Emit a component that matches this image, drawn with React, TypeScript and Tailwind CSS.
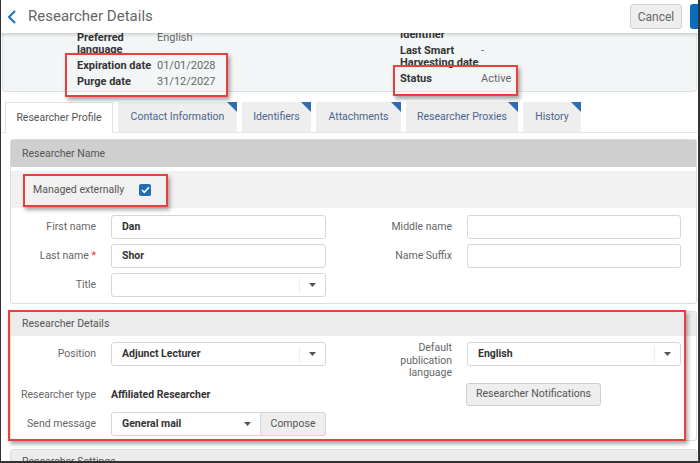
import React from 'react';

const tabs = [
  { label: 'Researcher Profile', w: 'w-[108px]', active: true },
  { label: 'Contact Information', w: 'w-[119px]' },
  { label: 'Identifiers', w: 'w-[69px]' },
  { label: 'Attachments', w: 'w-[85px]' },
  { label: 'Researcher Proxies', w: 'w-[112px]' },
  { label: 'History', w: 'w-[58px]' },
];

function Caret() {
  return (
    <svg width="7" height="4" viewBox="0 0 7 4">
      <path d="M0 0h7L3.5 4z" fill="#555" />
    </svg>
  );
}

function Label({ children }: { children: React.ReactNode }) {
  return <div className="text-right text-[#666] leading-[24px]">{children}</div>;
}

function TextInput({ value }: { value?: string }) {
  return (
    <div className="h-[24px] border border-[#d6d6d6] rounded-[3px] bg-white pl-[10px] flex items-center font-bold text-[#333]">
      {value}
    </div>
  );
}

function Select({ value }: { value?: string }) {
  return (
    <div className="h-[24px] border border-[#d6d6d6] rounded-[3px] bg-white flex items-center">
      <span className="flex-1 pl-[10px] font-bold text-[#333]">{value}</span>
      <div className="w-[26px] h-[16px] border-l border-[#eee] flex items-center justify-center">
        <Caret />
      </div>
    </div>
  );
}

function RedBox({ className }: { className: string }) {
  return (
    <div
      className={`absolute border-2 border-[#e8413c] shadow-[2px_3px_4px_rgba(0,0,0,0.35)] pointer-events-none ${className}`}
    />
  );
}

export default function App() {
  return (
    <div className="relative w-[700px] h-[463px] overflow-hidden bg-white border-l border-r-2 border-b-2 border-[#333] font-[Roboto,sans-serif] text-[10.5px] text-[#666]">
      {/* Top bar */}
      <header className="relative z-10 h-[33px] flex items-center bg-white shadow-[0_2px_3px_rgba(0,0,0,0.15)]">
        <svg className="ml-[6px]" width="10" height="16" viewBox="0 0 10 16">
          <path d="M8 2L2 8l6 6" fill="none" stroke="#1b6ec2" strokeWidth="2" />
        </svg>
        <h1 className="ml-[11px] text-[15px] text-[#666]">Researcher Details</h1>
        <div className="flex-1" />
        <button className="h-[25px] w-[52px] bg-[#eeeeee] border border-[#cfcfcf] rounded-[3px] text-[12px] text-[#666]">
          Cancel
        </button>
        <div className="ml-[8px] w-[8px] h-[25px] bg-[#0b6cb9] rounded-l-[3px]" />
      </header>

      {/* Summary panel (scrolled) */}
      <section className="ml-[1px] mr-[1px] h-[59px] overflow-hidden bg-[#f3f6f7] border-x border-b border-[#dde2e4] rounded-b-[4px] flex items-start pl-[74px] text-[11px]">
        <div className="w-[323px] -mt-[1px] flex flex-col gap-[4px] leading-[12px]">
          <div className="flex">
            <span className="w-[80px] font-bold text-[#333]">Preferred<br />language</span>
            <span>English</span>
          </div>
          <div className="flex">
            <span className="w-[80px] font-bold text-[#333]">Expiration date</span>
            <span>01/01/2028</span>
          </div>
          <div className="flex">
            <span className="w-[80px] font-bold text-[#333]">Purge date</span>
            <span>31/12/2027</span>
          </div>
        </div>
        <div className="-mt-[4px] flex flex-col gap-[4px] leading-[12px]">
          <div className="flex">
            <span className="w-[81px] font-bold text-[#333]">Identifier</span>
            <span></span>
          </div>
          <div className="flex">
            <span className="w-[81px] font-bold text-[#333]">Last Smart<br />Harvesting date</span>
            <span>-</span>
          </div>
          <div className="flex">
            <span className="w-[81px] font-bold text-[#333]">Status</span>
            <span>Active</span>
          </div>
        </div>
      </section>

      {/* Tabs */}
      <nav className="mt-[10px] h-[31px] flex items-end gap-[5px] pl-[4px] border-b border-[#e6e6e6] text-[11px]">
        {tabs.map((t) => (
          <div
            key={t.label}
            className={`relative h-[30px] ${t.w} flex items-center justify-center ${
              t.active
                ? 'bg-white border border-b-0 border-[#e3e3e3] text-[#555] h-[31px] -mb-px'
                : 'bg-[#eeeeee] text-[#4b6491]'
            }`}
          >
            <span className="text-[10.5px]">{t.label}</span>
            {!t.active && (
              <svg className="absolute top-0 right-0" width="10" height="10" viewBox="0 0 10 10">
                <path d="M0 0h10v10z" fill="#2d6cb5" />
              </svg>
            )}
          </div>
        ))}
      </nav>

      {/* Researcher Name */}
      <section className="mt-[6px] ml-[9px] mr-[1px] border border-[#dcdcdc] rounded-[3px]">
        <div className="h-[27px] bg-[#cfcfcf] pl-[11px] flex items-center text-[#555]">Researcher Name</div>
        <div className="mt-[4px] h-[37px] bg-[#f1f1f1] pl-[22px] flex items-center">
          <span className="text-[#555]">Managed externally</span>
          <span className="ml-[15px] w-[12px] h-[12px] rounded-[2px] bg-[#1f6fb2] flex items-center justify-center">
            <svg width="9" height="8" viewBox="0 0 9 8">
              <path d="M1 4l2.3 2.3L8 1.2" fill="none" stroke="#fff" strokeWidth="1.6" />
            </svg>
          </span>
        </div>
        <div className="grid grid-cols-[85px_215px_111px_214px] gap-x-[15px] gap-y-[5px] pt-[7px] pb-[6px]">
          <Label>First name</Label>
          <TextInput value="Dan" />
          <Label>Middle name</Label>
          <TextInput />
          <Label>
            Last name <span className="text-[#e0332b]">*</span>
          </Label>
          <TextInput value="Shor" />
          <Label>Name Suffix</Label>
          <TextInput />
          <Label>Title</Label>
          <Select />
        </div>
      </section>

      {/* Researcher Details */}
      <section className="mt-[7px] ml-[9px] mr-[1px] border border-[#dcdcdc] rounded-[3px]">
        <div className="h-[24px] bg-[#ececec] pl-[11px] flex items-center text-[#555]">Researcher Details</div>
        <div className="grid grid-cols-[85px_215px_111px_214px] gap-x-[15px] pt-[6px] pb-[4px]">
          <Label>Position</Label>
          <Select value="Adjunct Lecturer" />
          <div className="text-right leading-[12.5px]">
            Default
            <br />
            publication
            <br />
            language
          </div>
          <Select value="English" />

          <div className="mt-[3px] text-right leading-[23px]">Researcher type</div>
          <div className="mt-[3px] leading-[23px] font-bold text-[#333]">Affiliated Researcher</div>
          <div />
          <div className="mt-[3px]">
            <button className="h-[23px] w-[135px] -ml-px bg-[#eeeeee] border border-[#cfcfcf] rounded-[3px] text-[#555]">
              Researcher Notifications
            </button>
          </div>

          <div className="mt-[6px]">
            <Label>Send message</Label>
          </div>
          <div className="mt-[6px] flex">
            <div className="w-[150px] h-[24px] border border-[#d6d6d6] rounded-l-[3px] bg-white flex items-center">
              <span className="flex-1 pl-[10px] font-bold text-[#333]">General mail</span>
              <span className="w-[26px] flex justify-center">
                <Caret />
              </span>
            </div>
            <button className="flex-1 h-[24px] bg-[#eeeeee] border border-l-0 border-[#d6d6d6] rounded-r-[3px] text-[#555]">
              Compose
            </button>
          </div>
        </div>
      </section>

      {/* Researcher Settings */}
      <section className="mt-[8px] ml-[9px] mr-[1px] border border-[#dcdcdc] rounded-[3px]">
        <div className="h-[24px] bg-[#ececec] pl-[11px] flex items-center text-[#555]">Researcher Settings</div>
      </section>

      {/* annotations */}
      <RedBox className="left-[64px] top-[53px] w-[163px] h-[44px]" />
      <RedBox className="left-[392px] top-[65px] w-[125px] h-[31px]" />
      <RedBox className="left-[22px] top-[174px] w-[145px] h-[33px]" />
      <RedBox className="left-[7px] top-[310px] w-[678px] h-[131px]" />
    </div>
  );
}
